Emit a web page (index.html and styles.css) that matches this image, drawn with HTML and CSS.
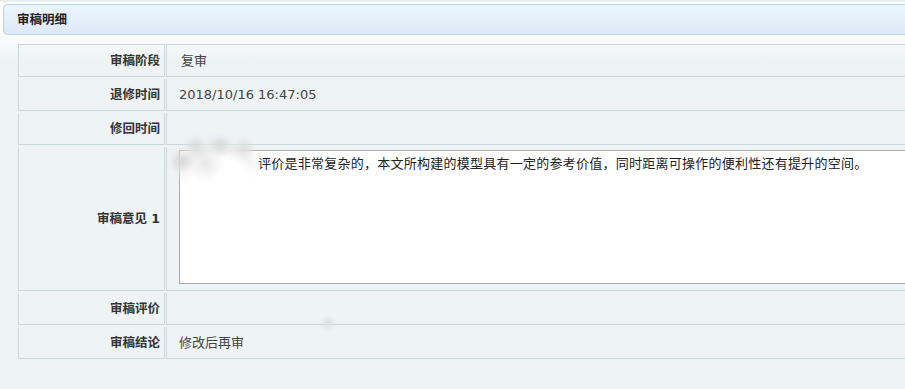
FILE: index.html
```html
<!DOCTYPE html>
<html lang="zh-CN">
  <head>
    <meta charset="UTF-8" />
    <title>审稿明细</title>
    <link rel="stylesheet" href="styles.css">
  </head>
  <body>
    <div class="panel">
      <div class="panel-head">审稿明细</div>
      <div class="panel-body">
        <table class="detail">
          <tr class="first">
            <th>审稿阶段</th>
            <td><span class="pad">复审</span></td>
          </tr>
          <tr>
            <th>退修时间</th>
            <td>2018/10/16 16:47:05</td>
          </tr>
          <tr>
            <th>修回时间</th>
            <td></td>
          </tr>
          <tr>
            <th>审稿意见 1</th>
            <td class="opinion">
              <div class="opinion-box">
                <textarea readonly>评价是非常复杂的，本文所构建的模型具有一定的参考价值，同时距离可操作的便利性还有提升的空间。</textarea>
                <div class="smudge"></div>
              </div>
            </td>
          </tr>
          <tr>
            <th>审稿评价</th>
            <td></td>
          </tr>
          <tr>
            <th>审稿结论</th>
            <td class="result">修改后再审<span class="spot"></span></td>
          </tr>
        </table>
      </div>
    </div>
  </body>
</html>
```

FILE: styles.css
```css
html, body {
  margin: 0;
  padding: 0;
}
body {
  background: #eff3f6;
  font-family: "DejaVu Sans", "Noto Sans CJK SC", sans-serif;
  font-size: 13px;
  color: #333;
  overflow: hidden;
  height: 389px;
}
.panel {
  background: linear-gradient(#e4e6e8, #fdfdfd 3px);
  padding-top: 4px;
}
.panel-head {
  margin-left: 3px;
  height: 29px;
  line-height: 29px;
  padding-left: 13px;
  border: 1px solid #b9d2e8;
  border-right: none;
  border-radius: 5px 0 0 5px;
  background: linear-gradient(#edf5fc, #dce9f6);
  font-weight: bold;
  font-size: 12.5px;
  color: #222;
}
.panel-body {
  background: linear-gradient(#f8fafc, #f8fafc 8px, #eef3f6 24px);
  padding: 7px 0 0 17px;
  height: 360px;
}
.detail {
  border-collapse: separate;
  border-spacing: 1px 2px;
  width: 920px;
}
.detail th,
.detail td {
  padding: 0;
  line-height: 31px;
  border-bottom: 1px solid #c8d9da;
  border-left: 1px solid #c8d9da;
  vertical-align: middle;
}
.detail th {
  width: 141px;
  padding-right: 4px;
  text-align: right;
  border-right: 1px solid #c8d9da;
  font-size: 12.5px;
  color: #333;
}
.detail td {
  padding-left: 12px;
  font-size: 13px;
  color: #444;
}
.detail .first th,
.detail .first td {
  border-top: 1px solid #c8d9da;
}
.pad {
  padding-left: 2px;
}
.detail td.opinion {
  line-height: normal;
  padding-top: 3px;
  padding-bottom: 6px;
}
.opinion-box {
  position: relative;
}
.opinion-box textarea {
  display: block;
  box-sizing: border-box;
  width: 740px;
  height: 134px;
  margin: 0;
  padding: 4px 0 0 78px;
  border: 1px solid #a9a9a9;
  background: #fff;
  resize: none;
  font-family: "Noto Sans CJK SC", sans-serif;
  font-size: 13px;
  letter-spacing: 0.25px;
  line-height: 16px;
  color: #222;
  outline: none;
}
.smudge {
  position: absolute;
  left: -12px;
  top: -12px;
  width: 96px;
  height: 52px;
  background:
    radial-gradient(circle at 15% 45%, #d2d4d2 0, transparent 12px),
    radial-gradient(circle at 30% 15%, #d8dad8 0, transparent 12px),
    radial-gradient(circle at 55% 12%, #d6d8d6 0, transparent 13px),
    radial-gradient(circle at 80% 20%, #dcdedc 0, transparent 12px),
    radial-gradient(circle at 40% 50%, #e6e7e6 0, transparent 18px),
    radial-gradient(ellipse at 55% 85%, #ffffff 0, #ffffff 28px, transparent 40px),
    radial-gradient(ellipse at 50% 50%, #eeefee 0, #eeefee 30px, transparent 48px);
  filter: blur(2px);
}
.result {
  position: relative;
}
.spot {
  position: absolute;
  left: 153px;
  top: -12px;
  width: 16px;
  height: 16px;
  border-radius: 50%;
  background: radial-gradient(circle, #d8e2de 0, transparent 8px);
  filter: blur(1px);
}
```
